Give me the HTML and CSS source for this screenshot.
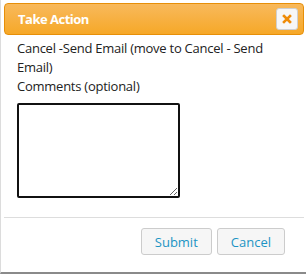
FILE: index.html
```html
<!DOCTYPE html>
<html>
  <head>
    <title>Take Action</title>
    <link rel="stylesheet" href="styles.css">
  </head>

<body>
  <div class = "dialog">
    <div class = "titlebar">
      <span class = "title">Take Action</span>
      <button class = "close-button" title = "Close">
        <svg width="10" height="10" viewBox="0 0 10 10">
          <path d="M2 2 L8 8 M8 2 L2 8" stroke="#ef8c08" stroke-width="2.6" stroke-linecap="square"/>
        </svg>
      </button>
    </div>

    <div class = "content">
      <p class = "action-name">Cancel -Send Email (move to Cancel - Send Email)</p>
      <label class = "comments-label">Comments (optional)</label>
      <textarea class = "comments"></textarea>
    </div>

    <div class = "buttonpane">
      <button class = "pane-button">Submit</button>
      <button class = "pane-button">Cancel</button>
    </div>
  </div>
</body>
</html>
```

FILE: styles.css
```css
body {
  margin: 0;
  background-color: white;
  font-family: "Open Sans", "Liberation Sans", sans-serif;
  font-size: 13px;
  color: #222;
}

.dialog {
  width: 306px;
  height: 274px;
  box-sizing: border-box;
  border-left: 1px solid #dcdcdc;
  border-bottom: 2px solid #8a8a8a;
  padding: 3px 2px 0 3px;
  display: flex;
  flex-direction: column;
}

.titlebar {
  height: 32px;
  box-sizing: border-box;
  border: 1px solid #e78f08;
  border-radius: 4px;
  background: linear-gradient(#f8b95c, #f6a828);
  display: flex;
  align-items: center;
  justify-content: space-between;
  padding: 0 5px 0 13px;
}

.title {
  color: white;
  font-weight: bold;
  font-size: 13px;
  letter-spacing: -0.5px;
}

.close-button {
  width: 22px;
  height: 22px;
  padding: 0;
  border: 1px solid #cfcfcf;
  border-radius: 3px;
  background-color: #f7f7f7;
  display: flex;
  align-items: center;
  justify-content: center;
}

.content {
  padding: 4px 13px 0 13px;
  height: 178px;
  line-height: 19px;
  letter-spacing: -0.25px;
}

.action-name {
  margin: 0;
}

.comments-label {
  display: block;
}

.comments {
  display: block;
  margin-top: 7px;
  width: 163px;
  height: 95px;
  box-sizing: border-box;
  border: 2px solid #111;
  border-radius: 2px;
  padding: 2px;
  font-family: "Open Sans", sans-serif;
}

.buttonpane {
  border-top: 1px solid #dddddd;
  display: flex;
  justify-content: flex-end;
  gap: 5px;
  padding: 10px 19px 0 0;
}

.pane-button {
  height: 27px;
  border: 1px solid #cccccc;
  border-radius: 3px;
  background-color: #f6f6f6;
  color: #1c94c4;
  font-family: "Open Sans", sans-serif;
  font-size: 13px;
  padding: 0 13px;
}
```
